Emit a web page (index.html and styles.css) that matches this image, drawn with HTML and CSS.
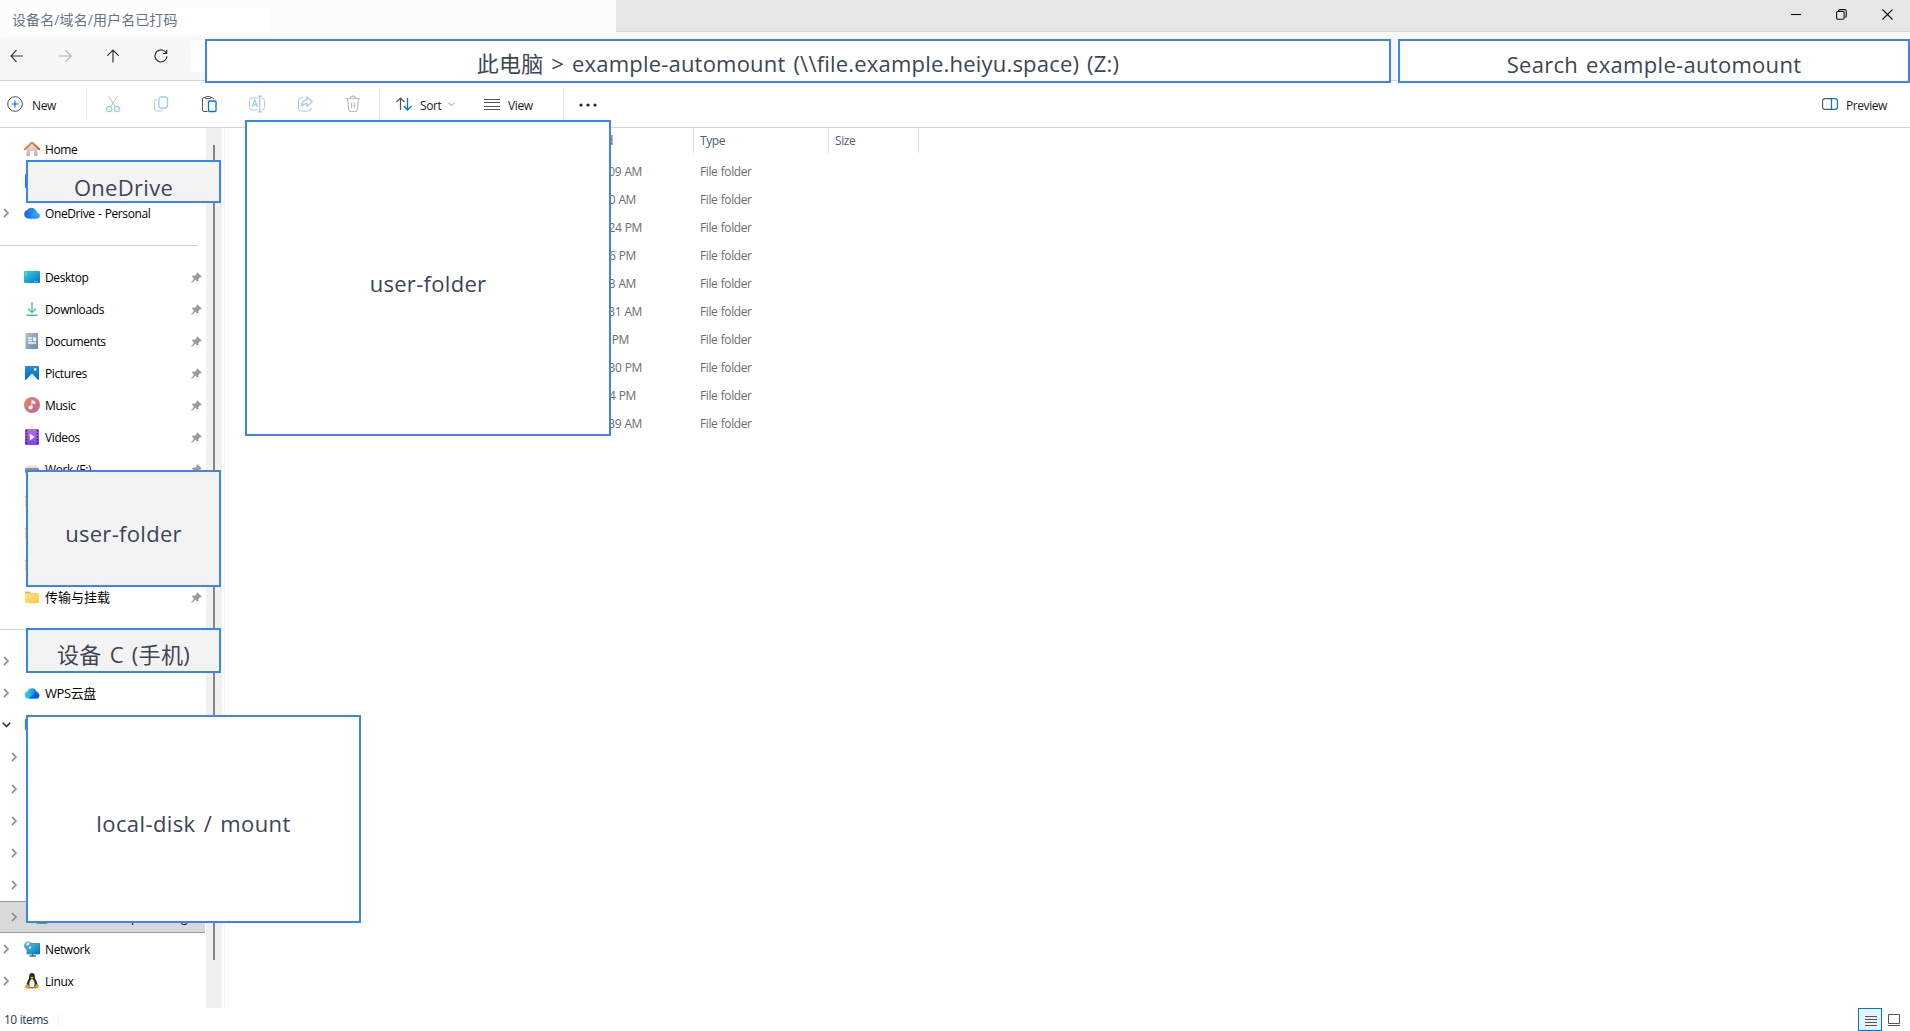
FILE: index.html
```html
<!DOCTYPE html>
<html lang="zh-CN">
<head>
    <meta charset="UTF-8">
    <meta name="viewport" content="width=device-width, initial-scale=1.0">
    <title>example-automount (Z:)</title>
    <link rel="stylesheet" href="styles.css">
</head>
<body>
    <svg class="defs">
        <defs>
            <linearGradient id="gRoof" x1="0" y1="0" x2="1" y2="1"><stop offset="0" stop-color="#f79a3c"/><stop offset="1" stop-color="#d2541b"/></linearGradient>
            <linearGradient id="gWall" x1="0" y1="0" x2="0" y2="1"><stop offset="0" stop-color="#e8e8e8"/><stop offset="1" stop-color="#b4b4b4"/></linearGradient>
            <linearGradient id="gDesk" x1="0" y1="0" x2="1" y2="1"><stop offset="0" stop-color="#35d0e0"/><stop offset="1" stop-color="#0b74bf"/></linearGradient>
            <linearGradient id="gDoc" x1="0" y1="0" x2="1" y2="1"><stop offset="0" stop-color="#a9bfd3"/><stop offset="1" stop-color="#6f8bab"/></linearGradient>
            <linearGradient id="gPic" x1="0" y1="0" x2="0" y2="1"><stop offset="0" stop-color="#1c93e0"/><stop offset="1" stop-color="#0a68bd"/></linearGradient>
            <linearGradient id="gMusic" x1="0" y1="0" x2="1" y2="1"><stop offset="0" stop-color="#f08a55"/><stop offset="1" stop-color="#b262a8"/></linearGradient>
            <linearGradient id="gVideo" x1="0" y1="0" x2="0" y2="1"><stop offset="0" stop-color="#b36bf0"/><stop offset="1" stop-color="#8243dc"/></linearGradient>
            <linearGradient id="gFolder" x1="0" y1="0" x2="1" y2="1"><stop offset="0" stop-color="#ffe49a"/><stop offset="1" stop-color="#fdc836"/></linearGradient>
            <linearGradient id="gCloud" x1="0" y1="0" x2="1" y2="0"><stop offset="0" stop-color="#1a62e6"/><stop offset="1" stop-color="#22b8fa"/></linearGradient>
            <linearGradient id="gCloudFront" x1="0" y1="1" x2="1" y2="0"><stop offset="0" stop-color="#2f6cf0"/><stop offset="1" stop-color="#35c5fb"/></linearGradient>
            <linearGradient id="gWps" x1="0" y1="0" x2="1" y2="0"><stop offset="0" stop-color="#35dcd2"/><stop offset=".5" stop-color="#18a6fb"/><stop offset="1" stop-color="#0b55dc"/></linearGradient>
        </defs>
        <symbol id="chev" viewBox="0 0 6 10"><path d="M1 1l4 4-4 4" fill="none" stroke="#8a8a8a" stroke-width="1.600"/></symbol>
        <symbol id="pin" viewBox="0 0 12 12"><path d="M6.800.4l4.900 4.400-1 .9-.9-.1-1.700 1.900.1 2.300-1 .9L4.700 8.400.9 11.800l-.7-.4L3.400 7.200 1 4.900l1-1 2.500.1L6.200 2.500l-.3-1.200z" fill="#8f9ca4"/></symbol>
        <symbol id="home" viewBox="0 0 16 16"><path d="M2.500 7L8 2.200 13.500 7v7.500q0 .5-.5.500h-3v-5H6v5H3q-.5 0-.5-.5z" fill="url(#gWall)"/><path d="M.8 8.200L8 1.500l7.200 6.700" fill="none" stroke="url(#gRoof)" stroke-width="1.900" stroke-linecap="round" stroke-linejoin="round"/></symbol>
        <symbol id="cloud" viewBox="0 0 16 16"><path d="M4.500 13.500A4.300 4.300 0 0 1 .2 9.200 4.400 4.400 0 0 1 3.300 5 5 5 0 0 1 11.500 4.800Q13 6 12.800 7.300a3.200 3.200 0 0 1 .2 6.200z" fill="url(#gCloud)"/><path d="M4.500 13.500L10.300 7.500Q15.500 7 15.900 10.500q-.1 3-3.100 3z" fill="url(#gCloudFront)"/></symbol>
        <symbol id="wps" viewBox="0 0 16 16"><path d="M4 13.500A3.700 3.700 0 0 1 3.600 6.200a4.700 4.700 0 0 1 8.800 0 3.900 3.900 0 0 1-.1 7.300z" fill="url(#gWps)"/><path d="M5 13.500l6.500-6q4 .3 4 3.200 0 2.800-3.200 2.800z" fill="#0b5ce2"/></symbol>
        <symbol id="desktop" viewBox="0 0 16 16"><rect y="2" width="16" height="12" rx="1" fill="url(#gDesk)"/><path d="M1.500 4h1M1.500 6h1" stroke="#d8fbff"/><path d="M10 12.700h4" stroke="#9fd8f5" stroke-dasharray="1 .6"/></symbol>
        <symbol id="download" viewBox="0 0 16 16"><path d="M8 1v10M4 7.500L8 11.500l4-4" fill="none" stroke="#45c5a4" stroke-width="1.400"/><path d="M2.500 14.300h11" stroke="#45b797" stroke-width="1.400"/></symbol>
        <symbol id="doc" viewBox="0 0 16 16"><rect x="1.500" y="0" width="12.500" height="16" rx="1" fill="url(#gDoc)"/><path d="M4 5h4M4 7.500h4M4 10h8" stroke="#f0f5fa" stroke-width="1.300"/><rect x="9" y="4.300" width="3" height="3.800" fill="#f0f5fa"/></symbol>
        <symbol id="pic" viewBox="0 0 16 16"><rect x="1" y="1" width="14" height="14" rx="1" fill="url(#gPic)"/><path d="M1.800 15L8 8.500l6.200 6.500z" fill="#f2faff"/><circle cx="11.200" cy="4.400" r="1.300" fill="#fff"/></symbol>
        <symbol id="music" viewBox="0 0 16 16"><circle cx="8" cy="8" r="8" fill="url(#gMusic)"/><circle cx="6.500" cy="10.500" r="2" fill="#fff"/><path d="M7.900 10.500V3.500l3 1.500v1.700L7.900 5.500" fill="#fff" stroke="#fff" stroke-width=".8"/></symbol>
        <symbol id="video" viewBox="0 0 16 16"><rect x="1" width="14" height="16" rx="1" fill="url(#gVideo)"/><path d="M2.500 1v15M13.500 1v15" stroke="#3f1a86" stroke-width="1.600" stroke-dasharray="1.500 1.500"/><path d="M5.800 4.500l5 3.500-5 3.500z" fill="#fff"/></symbol>
        <symbol id="drive" viewBox="0 0 16 16"><path d="M1 8q1-3.500 3-3.500h8q2 0 3 3.500z" fill="#dfe1e5"/><rect x="1" y="7" width="14" height="5" rx="1" fill="#8c9096"/></symbol>
        <symbol id="folder" viewBox="0 0 16 16"><path d="M1 3.500q0-1 1-1h3.500L7.200 4H14v4H1z" fill="#f1b126"/><rect x="1" y="4.300" width="14" height="9.700" rx=".8" fill="url(#gFolder)"/></symbol>
        <symbol id="pc" viewBox="0 0 16 16"><rect x=".8" y="2" width="14.500" height="11" rx=".8" fill="#3d8c9c"/><rect x="4" y="14" width="8" height="1" fill="#777"/></symbol>
        <symbol id="netdrive" viewBox="0 0 16 16"><rect x="1" y="5" width="14" height="6" fill="#aaa"/><rect x="2.500" y="11" width="11" height="4" rx="1" fill="#35b558"/></symbol>
        <symbol id="network" viewBox="0 0 16 16"><rect x="3" y="2.500" width="13" height="10.500" rx=".5" fill="url(#gDesk)" stroke="#24678c" stroke-width=".6"/><path d="M8.500 13v1.500M5.500 15h6.500" stroke="#56666f" stroke-width="1.300"/><circle cx="4.300" cy="4.700" r="4.200" fill="#4d9fc9"/><path d="M1.500 3q2-2.300 4.500-1.500l-1 2.500-2 1zM4.500 6l2.500-.8.500 1.300-2 1.800z" fill="#c8ecf5"/></symbol>
        <symbol id="linux" viewBox="0 0 16 16"><path d="M8 0q3 0 2.900 4 0 1.800 1.500 4 1.300 2.500.6 5.500L8 15.500 3 13.500q-.7-3 .8-5.700Q5.200 6 5.100 4 5 0 8 0z" fill="#2a2a2a"/><path d="M8 5.500q2 1.500 2.700 5 0 4-2.700 4t-2.700-4Q6 7 8 5.500z" fill="#f7f7f7"/><path d="M6.300 4.300L8 3.400l1.800.9L8 5.700z" fill="#e8ae1d"/><path d="M1.500 12.200l2.500-1 2.500 3.300q-.2 1.500-1.700 1.400l-3.500-1zM14.500 12.200l-2.400-1-2.100 3.300q.1 1.500 1.500 1.400l3.300-1.500z" fill="#d9a018"/></symbol>
    </svg>

    <div class="window">
        <header class="titlebar">
            <div class="tab"><span class="tab-title">设备名/域名/用户名已打码</span></div>
            <div class="window-buttons">
                <svg width="11" height="11" viewBox="0 0 11 11"><path d="M1 5.500h10"/></svg>
                <svg width="11" height="11" viewBox="0 0 11 11"><rect x=".6" y="2.500" width="7.500" height="7.800" rx="1.200"/><path d="M2.500 2.300V1.700Q2.700.6 4 .6h4.500q1.800 0 1.800 1.900v4.300q0 1.300-1.300 1.500"/></svg>
                <svg width="11" height="11" viewBox="0 0 11 11"><path d="M.5.5l10 10M10.500.5l-10 10"/></svg>
            </div>
        </header>

        <nav class="navbar">
            <svg width="14" height="14" viewBox="0 0 14 14"><path d="M13 7H1M6.500 1.200L1 7l5.500 5.800"/></svg>
            <svg class="dim" width="14" height="14" viewBox="0 0 14 14"><path d="M1 7h12M7.500 1.200L13 7l-5.500 5.800"/></svg>
            <svg width="14" height="14" viewBox="0 0 14 14"><path d="M7 13.500V1M1.200 6.800L7 1l5.800 5.800"/></svg>
            <svg width="14" height="14" viewBox="0 0 14 14"><path d="M12.400 4.300A6 6 0 1 0 13 7.300M12.700.8v3.700H9"/></svg>
            <div class="address"></div>
        </nav>

        <div class="toolbar">
            <div class="tool new">
                <svg width="16" height="16" viewBox="0 0 16 16"><circle cx="8" cy="8" r="7.300" stroke="#555"/><path d="M8 4.500v7M4.500 8h7" stroke="#0078d4" stroke-width="1.200"/></svg>
                <span>New</span>
            </div>
            <div class="tool-icons">
                <svg width="16" height="18" viewBox="0 0 16 18"><g stroke="#c4c4c4"><path d="M3.500 1l7 11M12.500 1l-7 11"/></g><g stroke="#9ccdf0" stroke-width="1.300"><circle cx="4" cy="14" r="2.700"/><circle cx="12" cy="14" r="2.700"/></g></svg>
                <svg width="16" height="18" viewBox="0 0 16 18"><path d="M4.500 4.500H3.500q-2 0-2 2v7.500q0 2 2 2h4q2 0 2.300-1.800" stroke="#c4c4c4"/><rect x="6" y="2" width="8.500" height="11" rx="2" stroke="#9ccdf0" stroke-width="1.300"/></svg>
                <svg width="16" height="18" viewBox="0 0 16 18"><path d="M6.500 16.500H3q-1.500 0-1.500-1.500V4Q1.500 2.500 3 2.500h1M10 2.500h1.300q1.200.2 1.200 1.700M4.500 3.500q-.8-2 1-2h3q2 0 1 2z" stroke="#555"/><rect x="7.500" y="6" width="7.500" height="10.500" rx="1" stroke="#0078d4" stroke-width="1.300"/></svg>
                <svg width="16" height="18" viewBox="0 0 16 18"><path d="M9 15H3q-2.500 0-2.500-2.500v-7Q.5 3 3 3h6M12.500 3q3 0 3 2.500v7q0 2.500-3 2.500" stroke="#c4c4c4"/><path d="M10.800 1.500v15M9 1.200h4M9 16.800h4M3 12l2.800-7 2.700 7M4 9.800h3.600" stroke="#9ccdf0" stroke-width="1.200"/></svg>
                <svg width="16" height="18" viewBox="0 0 16 18"><path d="M6 3H3.500Q1.500 3 1.500 5v9q0 2 2 2h8.500q2 0 2-2v-1.500" stroke="#c4c4c4"/><path d="M10 2l5.300 4.700L10 11.300V8.700q-4 .1-5.500 2.800.3-6 5.500-6.800z" stroke="#9ccdf0" stroke-width="1.200"/></svg>
                <svg width="16" height="18" viewBox="0 0 16 18"><path d="M1 3.500h14M5.500 3.500q0-2.300 2.500-2.300t2.500 2.300M2.500 3.500l1.300 11.500q.2 1.500 1.700 1.500h5q1.500 0 1.700-1.500l1.300-11.500M6.600 7.500v5.500M9.400 7.500v5.500" stroke="#bdbdbd" stroke-width="1.200"/></svg>
            </div>
            <div class="tool sort">
                <svg width="16" height="14" viewBox="0 0 16 14"><path d="M4.500 13V1M.5 5l4-4 4 4" stroke="#555" stroke-width="1.200"/><path d="M11.500 1v12M7.800 9l3.700 4 4-4" stroke="#0078d4" stroke-width="1.300"/></svg>
                <span>Sort</span>
                <svg class="caret" width="7" height="5" viewBox="0 0 7 5"><path d="M.5.8l3 3 3-3" stroke="#8a8a8a"/></svg>
            </div>
            <div class="tool view">
                <svg width="16" height="11" viewBox="0 0 16 11"><path d="M0 .5h16M0 3.500h16M0 7.500h16M0 10.500h16" stroke="#555"/></svg>
                <span>View</span>
            </div>
            <svg class="more" width="18" height="4" viewBox="0 0 18 4"><circle cx="2" cy="2" r="1.600"/><circle cx="9" cy="2" r="1.600"/><circle cx="16" cy="2" r="1.600"/></svg>
            <div class="tool preview">
                <svg width="16" height="12" viewBox="0 0 16 12"><path d="M9.500.6H3Q.6.6.6 3v6q0 2.400 2.400 2.400h6.500" stroke="#555" stroke-width="1.100"/><path d="M9.500.6V11.400H13q2.400 0 2.400-2.400V3Q15.400.6 13 .6z" stroke="#0078d4" stroke-width="1.200"/></svg>
                <span>Preview</span>
            </div>
        </div>

        <main class="content">
            <aside class="sidebar">
                <ul class="tree">
                    <li><svg class="icon"><use href="#home"/></svg>Home</li>
                    <li><svg class="icon"><use href="#pic"/></svg></li>
                    <li><svg class="chev"><use href="#chev"/></svg><svg class="icon"><use href="#cloud"/></svg>OneDrive - Personal</li>
                    <li class="divider"></li>
                    <li><svg class="icon"><use href="#desktop"/></svg>Desktop<svg class="pin"><use href="#pin"/></svg></li>
                    <li><svg class="icon"><use href="#download"/></svg>Downloads<svg class="pin"><use href="#pin"/></svg></li>
                    <li><svg class="icon"><use href="#doc"/></svg>Documents<svg class="pin"><use href="#pin"/></svg></li>
                    <li><svg class="icon"><use href="#pic"/></svg>Pictures<svg class="pin"><use href="#pin"/></svg></li>
                    <li><svg class="icon"><use href="#music"/></svg>Music<svg class="pin"><use href="#pin"/></svg></li>
                    <li><svg class="icon"><use href="#video"/></svg>Videos<svg class="pin"><use href="#pin"/></svg></li>
                    <li><svg class="icon"><use href="#drive"/></svg>Work (F:)<svg class="pin"><use href="#pin"/></svg></li>
                    <li><svg class="icon"><use href="#folder"/></svg></li>
                    <li><svg class="icon"><use href="#folder"/></svg></li>
                    <li><svg class="icon"><use href="#folder"/></svg></li>
                    <li class="cjk"><svg class="icon"><use href="#folder"/></svg><span>传输与挂载</span><svg class="pin"><use href="#pin"/></svg></li>
                    <li class="divider"></li>
                    <li><svg class="chev"><use href="#chev"/></svg></li>
                    <li class="cjk wps"><svg class="chev"><use href="#chev"/></svg><svg class="icon"><use href="#wps"/></svg><span>WPS云盘</span></li>
                    <li><svg class="chev-open" viewBox="0 0 9 6"><path d="M.8.8l3.700 3.700L8.200.8"/></svg><svg class="icon"><use href="#pc"/></svg></li>
                    <li class="child"><svg class="chev"><use href="#chev"/></svg></li>
                    <li class="child"><svg class="chev"><use href="#chev"/></svg></li>
                    <li class="child"><svg class="chev"><use href="#chev"/></svg></li>
                    <li class="child"><svg class="chev"><use href="#chev"/></svg></li>
                    <li class="child"><svg class="chev"><use href="#chev"/></svg></li>
                    <li class="child selected"><svg class="chev"><use href="#chev"/></svg><svg class="icon"><use href="#netdrive"/></svg><span class="clipped"><span>p</span><span>g</span></span></li>
                    <li><svg class="chev"><use href="#chev"/></svg><svg class="icon"><use href="#network"/></svg>Network</li>
                    <li><svg class="chev"><use href="#chev"/></svg><svg class="icon"><use href="#linux"/></svg>Linux</li>
                </ul>
                <div class="scrollbar"><div class="thumb"></div></div>
            </aside>

            <section class="files">
                <div class="row head"><span class="date">Date modified</span><span>Type</span><span>Size</span></div>
                <div class="row"><span class="date">09 AM</span><span>File folder</span></div>
                <div class="row"><span class="date short">0 AM</span><span>File folder</span></div>
                <div class="row"><span class="date">24 PM</span><span>File folder</span></div>
                <div class="row"><span class="date short">6 PM</span><span>File folder</span></div>
                <div class="row"><span class="date short">3 AM</span><span>File folder</span></div>
                <div class="row"><span class="date">31 AM</span><span>File folder</span></div>
                <div class="row"><span class="date shorter">PM</span><span>File folder</span></div>
                <div class="row"><span class="date">30 PM</span><span>File folder</span></div>
                <div class="row"><span class="date short">4 PM</span><span>File folder</span></div>
                <div class="row"><span class="date">39 AM</span><span>File folder</span></div>
            </section>
        </main>

        <footer class="statusbar">
            <span class="count">10 items</span>
            <div class="view-switch">
                <svg class="active" width="24" height="23" viewBox="0 0 24 23"><path d="M7 8.500h12M7 11.500h12M7 14.500h12M7 17.500h12"/></svg>
                <svg width="24" height="23" viewBox="0 0 24 23"><path d="M6.500 6.500h11v9h-11zM6 17.500h12"/></svg>
            </div>
        </footer>

        <!-- 打码区域 -->
        <div class="mask mask-address">此电脑 &gt; example-automount (\\file.example.heiyu.space) (Z:)</div>
        <div class="mask mask-search">Search example-automount</div>
        <div class="mask mask-files">user-folder</div>
        <div class="mask mask-onedrive">OneDrive</div>
        <div class="mask mask-folders">user-folder</div>
        <div class="mask mask-phone">设备 C (手机)</div>
        <div class="mask mask-disks">local-disk / mount</div>
    </div>
</body>
</html>
```
FILE: styles.css
```css
* {
    box-sizing: border-box;
}
body {
    margin: 0;
    font-family: "Open Sans", "Noto Sans CJK SC", sans-serif;
    font-size: 12px;
    letter-spacing: -0.4px;
    word-spacing: 0.6px;
    color: #1a1a1a;
    background: #fff;
    overflow: hidden;
}
svg {
    display: block;
    flex: none;
    fill: none;
}
.defs {
    position: absolute;
    width: 0;
    height: 0;
}
.window {
    position: relative;
    display: flex;
    flex-direction: column;
    width: 1910px;
    height: 1031px;
}

/* title bar */
.titlebar {
    display: flex;
    align-items: flex-start;
    height: 37px;
    background: #f7f7f7;
}
.tab {
    width: 616px;
    height: 37px;
    padding: 8px;
    background: #fcfcfc;
}
.tab-title {
    display: block;
    width: 261px;
    height: 27px;
    padding-left: 4px;
    font-size: 14px;
    line-height: 24px;
    letter-spacing: 0.1px;
    color: #64748b;
    background: #fff;
}
.window-buttons {
    flex: 1;
    display: flex;
    justify-content: flex-end;
    gap: 35px;
    height: 32px;
    padding: 9px 17px 0 0;
    background: #e7e7e7;
    border-bottom: 1px solid #d5d5d5;
}
.window-buttons svg {
    stroke: #111;
    stroke-width: 1.1;
}

/* navigation */
.navbar {
    display: flex;
    align-items: flex-start;
    gap: 34px;
    height: 44px;
    padding: 12px 0 0 10px;
    background: #f7f7f7;
    border-bottom: 1px solid #d5d5d5;
}
.navbar svg {
    stroke: #333;
    stroke-width: 1.2;
}
.navbar .dim {
    stroke: #b3b3b3;
}
.address {
    flex: 1;
    height: 32px;
    margin: -9px 520px 0 -11px;
    background: #fdfdfd;
    border-radius: 4px;
}

/* toolbar */
.toolbar {
    display: flex;
    align-items: center;
    height: 47px;
    border-bottom: 1px solid #d5d5d5;
}
.tool {
    display: flex;
    align-items: center;
}
.tool span {
    padding-top: 3px;
}
.new {
    width: 87px;
    height: 32px;
    padding-left: 7px;
    gap: 9px;
    border-right: 1px solid #e8e8e8;
}
.tool-icons {
    display: flex;
    gap: 32px;
    height: 32px;
    align-items: center;
    width: 293px;
    padding-left: 18px;
    border-right: 1px solid #e8e8e8;
}
.sort {
    margin-left: 16px;
    width: 88px;
    gap: 8px;
}
.caret {
    margin-left: -1px;
}
.view {
    width: 80px;
    height: 32px;
    gap: 8px;
    border-right: 1px solid #e8e8e8;
}
.more {
    margin-left: 15px;
    margin-top: 1px;
    fill: #222;
}
.preview {
    margin-left: auto;
    margin-right: 23px;
    gap: 8px;
}

/* sidebar */
.content {
    display: flex;
    height: 880px;
}
.sidebar {
    display: flex;
    width: 225px;
    border-right: 1px solid #f5f5f5;
}
.tree {
    width: 206px;
    margin: 0;
    padding: 5px 1px 0 0;
    list-style: none;
    color: #000;
}
.tree li {
    display: flex;
    align-items: center;
    height: 32px;
    padding-left: 24px;
}
.tree .cjk {
    font-size: 13px;
    letter-spacing: 0;
}
.tree .wps {
    letter-spacing: -0.4px;
}
.cjk span {
    padding-bottom: 2px;
}
.tree .icon {
    width: 16px;
    height: 16px;
    margin-right: 5px;
}
.chev {
    width: 6px;
    height: 10px;
    margin-left: -21px;
    margin-right: 15px;
}
.chev-open {
    width: 9px;
    height: 6px;
    margin-left: -22px;
    margin-right: 13px;
    stroke: #222;
    stroke-width: 1.5;
}
.tree .child {
    padding-left: 32px;
}
.pin {
    width: 11px;
    height: 11px;
    margin-left: auto;
    margin-right: 3px;
}
.divider::before {
    content: "";
    width: 197px;
    height: 1px;
    margin-left: -24px;
    background: #d2d2d2;
}
.tree .selected {
    background: #d9d9d9;
    border-top: 1px solid #999;
    border-bottom: 1px solid #999;
}
.selected .icon {
    margin-left: 2px;
}
.clipped {
    display: flex;
    gap: 43px;
    margin-left: 76px;
}
.scrollbar {
    width: 16px;
    height: 880px;
    padding-top: 17px;
    background: #f0f0f0;
}
.thumb {
    width: 2px;
    height: 815px;
    margin-left: 7px;
    background: #858585;
}

/* file list */
.row {
    display: grid;
    grid-template-columns: 469px 135px 90px;
    height: 28px;
    line-height: 28px;
    color: #6d6d6d;
}
.row span {
    padding-left: 6px;
}
.head {
    height: 25px;
    margin-bottom: 5px;
    line-height: 25px;
    color: #4c607a;
}
.head span {
    border-right: 1px solid #e0e0e0;
}
.row .date {
    padding-right: 52px;
    text-align: right;
}
.row .short {
    padding-right: 58px;
}
.row .shorter {
    padding-right: 65px;
}
.head .date {
    padding-right: 80px;
}

/* status bar */
.statusbar {
    display: flex;
    justify-content: space-between;
    height: 23px;
    color: #1e395b;
}
.count {
    width: 59px;
    height: 12px;
    margin-top: 6px;
    padding-left: 4px;
    line-height: 11px;
    letter-spacing: -0.55px;
    border-right: 1px solid #f3f3f3;
}
.view-switch {
    display: flex;
    margin-right: 4px;
}
.view-switch svg {
    stroke: #555;
}
.view-switch .active {
    background: #e5f3fb;
    outline: 1px solid #0078d7;
    outline-offset: -1px;
}

/* masks laid over the private parts */
.mask {
    position: absolute;
    display: flex;
    align-items: center;
    justify-content: center;
    padding-top: 9px;
    border: 2px solid #3c83f6;
    background: #fff;
    font-size: 22px;
    line-height: 30px;
    letter-spacing: 0.3px;
    word-spacing: 2px;
    white-space: nowrap;
    color: #3b4657;
}
.mask-address {
    left: 205px;
    top: 39px;
    width: 1186px;
    height: 44px;
    padding-top: 3px;
    letter-spacing: 0.2px;
}
.mask-search {
    left: 1398px;
    top: 39px;
    width: 512px;
    height: 44px;
    padding-top: 5px;
}
.mask-files {
    left: 245px;
    top: 120px;
    width: 366px;
    height: 316px;
}
.mask-onedrive {
    left: 26px;
    top: 160px;
    width: 195px;
    height: 43px;
    padding-top: 10px;
    background: #f3f3f3;
}
.mask-folders {
    left: 26px;
    top: 470px;
    width: 195px;
    height: 117px;
    background: #f3f3f3;
}
.mask-phone {
    left: 26px;
    top: 628px;
    width: 195px;
    height: 45px;
    padding-top: 7px;
    background: #f3f3f3;
}
.mask-disks {
    left: 26px;
    top: 715px;
    width: 335px;
    height: 208px;
    padding-top: 7px;
    letter-spacing: 0.4px;
}
```
